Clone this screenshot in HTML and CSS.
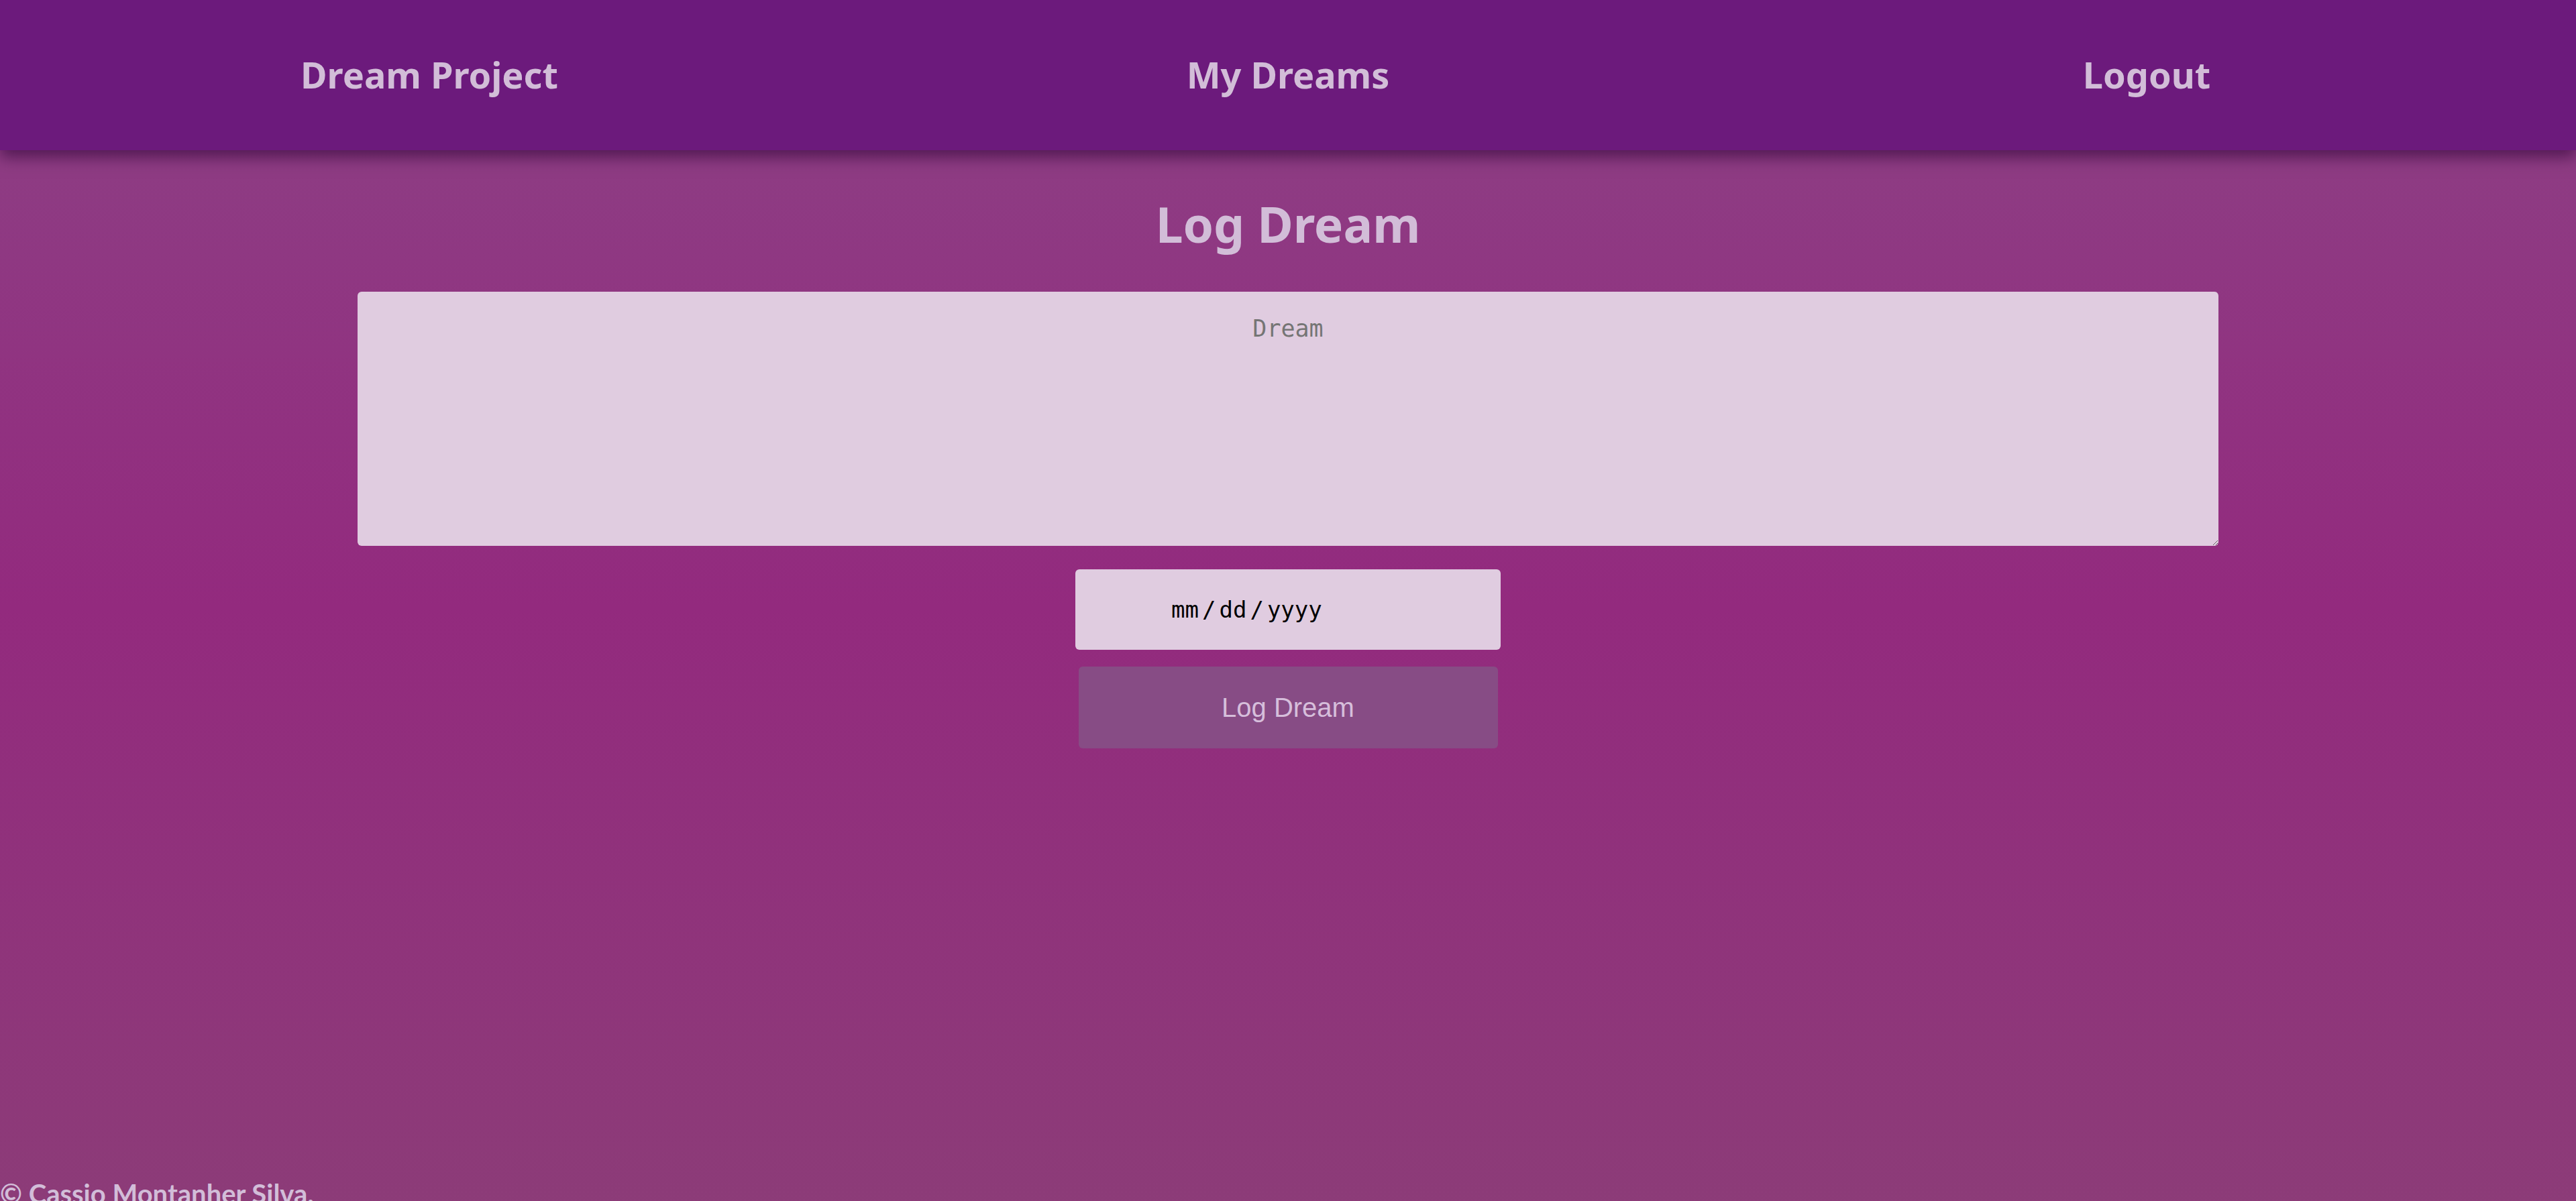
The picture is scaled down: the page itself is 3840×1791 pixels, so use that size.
FILE: index.html
```html
<!DOCTYPE html>
<html lang="en">
<head>
<meta charset="utf-8">
<title>Log Dream</title>
<link rel="stylesheet" href="styles.css">
</head>
<body>
<header class="topbar">
  <nav class="nav">
    <a class="nav-link" href="#">Dream Project</a>
    <a class="nav-link" href="#">My Dreams</a>
    <a class="nav-link" href="#">Logout</a>
  </nav>
</header>
<main class="main">
  <h1 class="title">Log Dream</h1>
  <form class="dream-form">
    <textarea class="dream-text" placeholder="Dream"></textarea>
    <div class="date-input" role="textbox" aria-label="date">
      <span class="date-part">mm</span><span class="date-sep">/</span><span class="date-part">dd</span><span class="date-sep">/</span><span class="date-part">yyyy</span>
    </div>
    <button class="submit" type="button">Log Dream</button>
  </form>
</main>
<footer class="footer">© Cassio Montanher Silva.</footer>
</body>
</html>
```

FILE: styles.css
```css
* { box-sizing: border-box; }
html, body { margin: 0; padding: 0; }
body {
  min-height: 100vh;
  background: linear-gradient(to bottom, #8c4285 0%, #932a7e 50%, #8c3c78 100%);
  font-family: "Noto Sans", sans-serif;
  color: #d2bdd8;
  overflow: hidden;
}
.topbar {
  height: 224px;
  background: #6c1a7c;
  box-shadow: 0 10px 22px rgba(40, 0, 50, 0.6);
  position: relative;
  z-index: 1;
}
.nav {
  display: grid;
  grid-template-columns: 1fr 1fr 1fr;
  height: 100%;
  align-items: center;
  padding-bottom: 2px;
}
.nav-link {
  text-align: center;
  color: #d2bdd8;
  text-decoration: none;
  font-weight: 700;
  font-size: 54px;
}
.main {
  display: flex;
  flex-direction: column;
  align-items: center;
  height: 1526px;
}
.title {
  margin: 40px 0 0;
  font-size: 73px;
  font-weight: 700;
  line-height: 140px;
  color: #d2bdd8;
}
.dream-form {
  display: flex;
  flex-direction: column;
  align-items: center;
  width: 100%;
}
.dream-text {
  margin-top: 31px;
  width: 2774px;
  height: 379px;
  background: #e0cce0;
  border: none;
  border-radius: 6px;
  padding: 35px 28px 28px;
  text-align: center;
  font-family: "DejaVu Sans Mono", monospace;
  font-size: 35px;
  color: #333;
  resize: vertical;
}
.dream-text::placeholder { color: #757575; }
.date-input {
  margin-top: 35px;
  width: 634px;
  height: 120px;
  background: #e0cce0;
  border-radius: 6px;
  padding: 0 0 0 143px;
  display: flex;
  align-items: center;
  font-family: "DejaVu Sans Mono", monospace;
  font-size: 34px;
  color: #000;
}
.date-sep { margin: 0 5px; }
.submit {
  margin-top: 25px;
  width: 625px;
  height: 122px;
  background: #874c85;
  border: none;
  border-radius: 6px;
  color: #d6bedb;
  font-family: "Liberation Sans", Arial, sans-serif;
  font-size: 40px;
}
.footer {
  font-weight: 700;
  font-size: 40px;
  line-height: 60px;
  color: #d2bdd8;
  font-family: "Lato", sans-serif;
}
```
